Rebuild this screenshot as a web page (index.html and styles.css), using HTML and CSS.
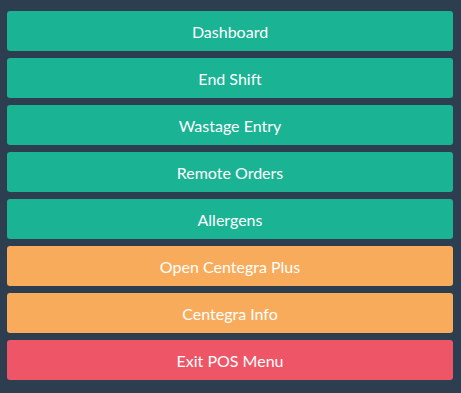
FILE: index.html
```html
<!DOCTYPE html>
<html lang="en">
<head>
    <meta charset="UTF-8">
    <meta name="viewport" content="width=device-width, initial-scale=1.0">
    <title>POS Menu</title>
    <link rel="stylesheet" href="styles.css">
</head>
<body>
    <div id="menu">
        <button class="teal">Dashboard</button>
        <button class="teal">End Shift</button>
        <button class="teal">Wastage Entry</button>
        <button class="teal">Remote Orders</button>
        <button class="teal">Allergens</button>
        <button class="orange">Open Centegra Plus</button>
        <button class="orange">Centegra Info</button>
        <button class="red">Exit POS Menu</button>
    </div>
</body>
</html>
```

FILE: styles.css
```css
body {
    margin: 0;
    background-color: #2c3e50;
    font-family: Lato, "Open Sans", sans-serif;
    height: 393px;
}
#menu {
    display: flex;
    flex-direction: column;
    gap: 7px;
    padding: 11px 8px 13px 7px;
}
button {
    height: 40px;
    border: none;
    border-radius: 3px;
    color: white;
    font-family: inherit;
    font-size: 16px;
    cursor: pointer;
}
.teal {
    background-color: #1ab394;
}
.orange {
    background-color: #f8ac5b;
}
.red {
    background-color: #ee5566;
}
```
